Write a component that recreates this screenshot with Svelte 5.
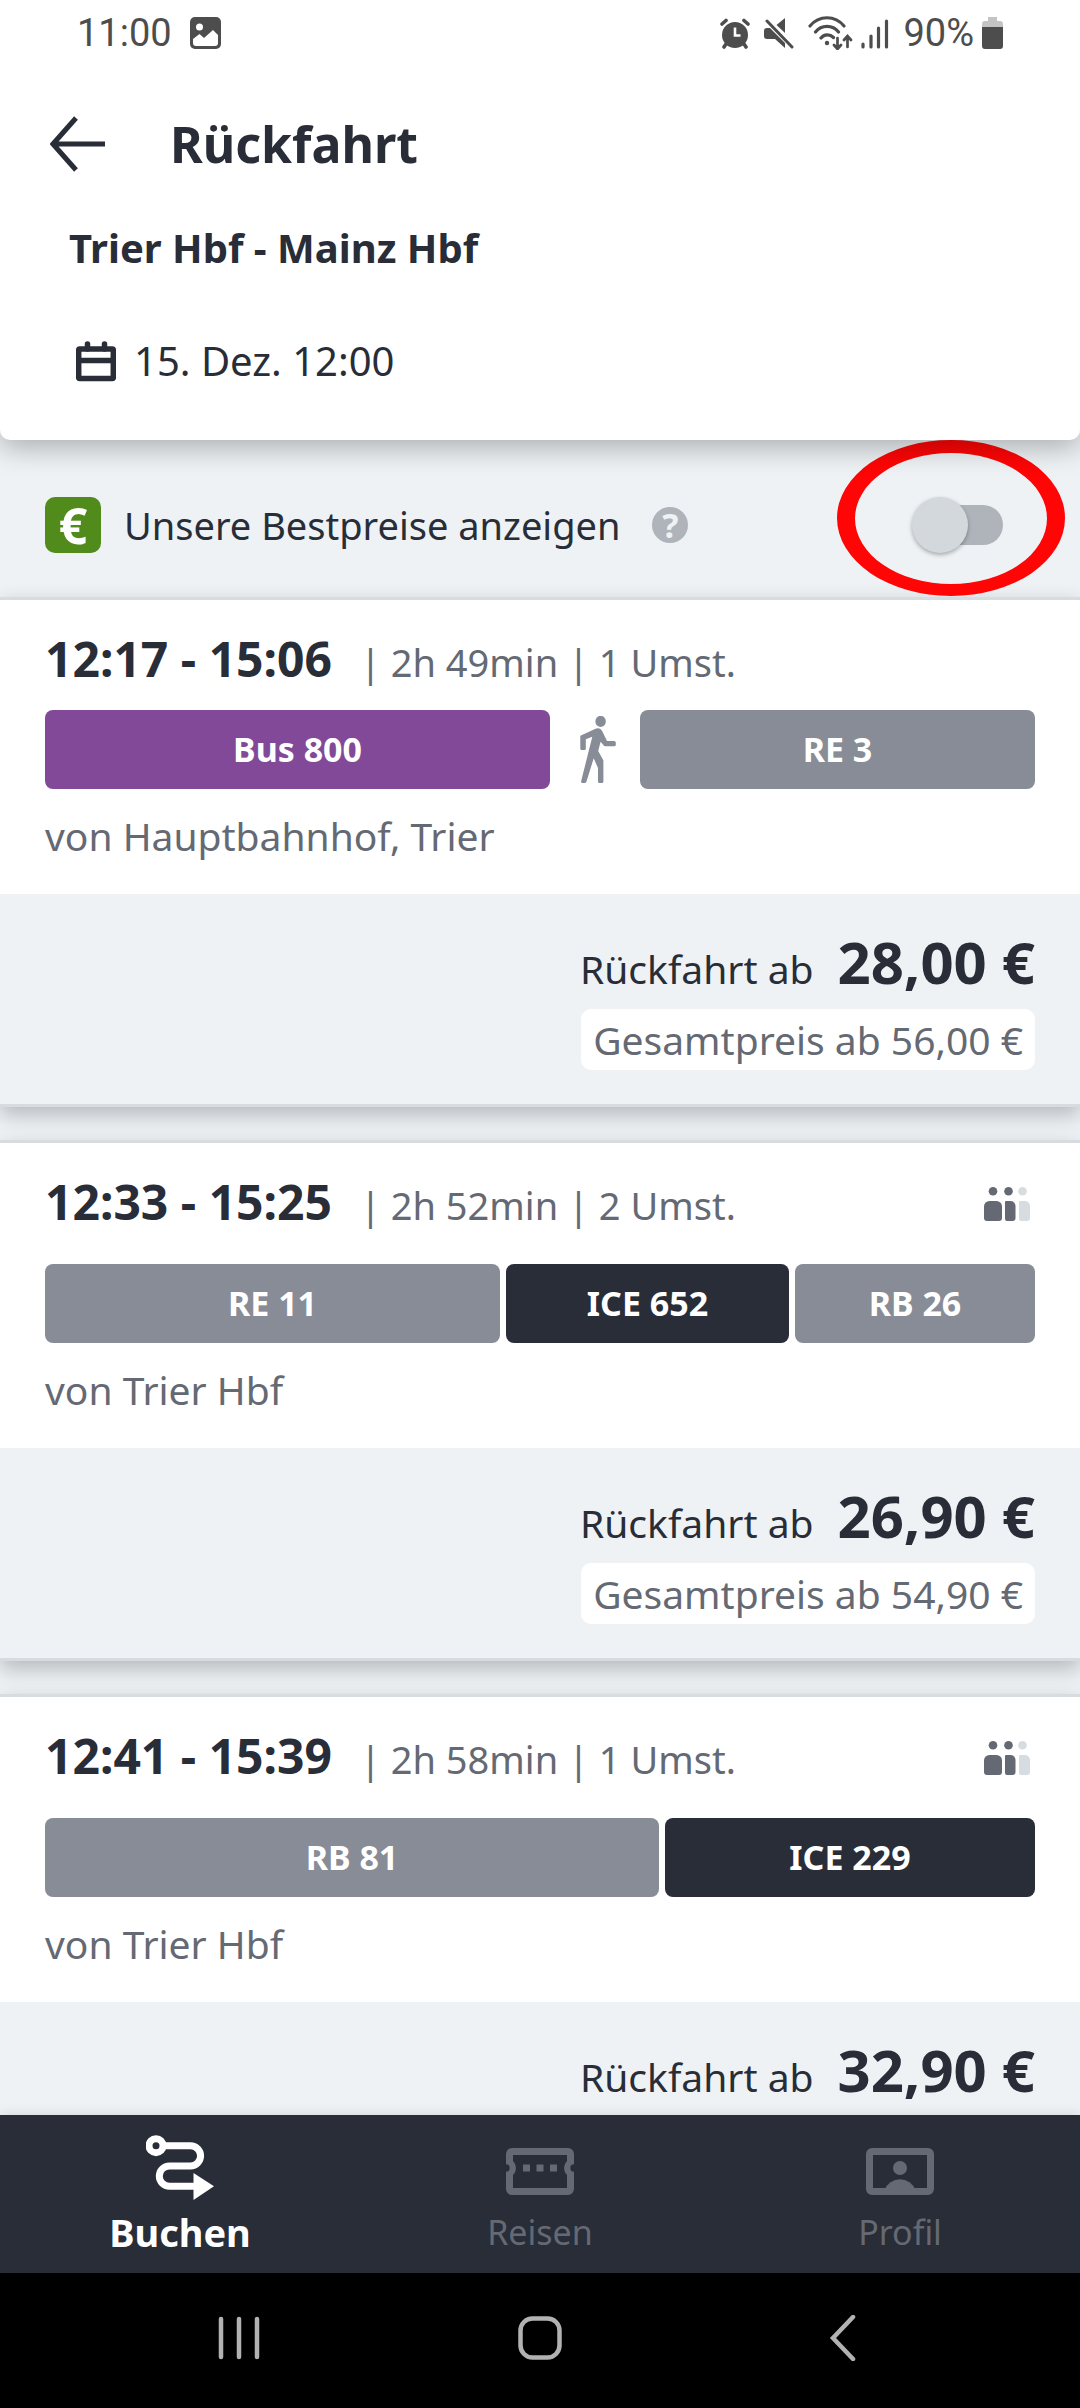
<script>
  const navItems = ['Buchen', 'Reisen', 'Profil']

  const connections = [
    {
      time: '12:17 - 15:06',
      details: '| 2h 49min | 1 Umst.',
      from: 'von Hauptbahnhof, Trier',
      price: '28,00 €',
      total: '56,00 €',
      occupancy: false,
      legs: [
        { type: 'bus', name: 'Bus 800', share: 505 },
        { type: 'walk' },
        { type: 'regio', name: 'RE 3', share: 395 }
      ]
    },
    {
      time: '12:33 - 15:25',
      details: '| 2h 52min | 2 Umst.',
      from: 'von Trier Hbf',
      price: '26,90 €',
      total: '54,90 €',
      occupancy: true,
      legs: [
        { type: 'regio', name: 'RE 11', share: 455 },
        { type: 'ice', name: 'ICE 652', share: 283 },
        { type: 'regio', name: 'RB 26', share: 240 }
      ]
    },
    {
      time: '12:41 - 15:39',
      details: '| 2h 58min | 1 Umst.',
      from: 'von Trier Hbf',
      price: '32,90 €',
      occupancy: true,
      legs: [
        { type: 'regio', name: 'RB 81', share: 614 },
        { type: 'ice', name: 'ICE 229', share: 370 }
      ]
    }
  ]

  let active = $state('Buchen')
  let bestPrices = $state(false)
</script>

<div class="screen">
  <header class="header">
    <div class="status">
      <span>11:00</span>
      <svg class="picture" width="31" height="32" viewBox="0 0 31 32">
        <rect width="31" height="32" rx="5" fill="#4d4d4d" />
        <circle cx="9.500" cy="10" r="3.500" fill="#fff" />
        <path d="M3 22l6.500-5 4.500 4L23 13l5 5v8a3 3 0 0 1-3 3H6a3 3 0 0 1-3-3z" fill="#fff" />
      </svg>
      <div class="status-right">
        <svg width="30" height="32" viewBox="0 0 30 32" fill="none" stroke="#4d4d4d" stroke-linecap="round">
          <circle cx="15" cy="18" r="13" fill="#4d4d4d" stroke="none" />
          <path d="M2 7l4-3.500M28 7l-4-3.500M6 27l-2 3M24 27l2 3" stroke-width="3.600" />
          <path d="M15 10.500v8h5.500" stroke="#fff" stroke-width="2.600" stroke-linecap="butt" />
        </svg>
        <svg width="30" height="32" viewBox="0 0 30 32">
          <path d="M3 11h3l15 15v5L11 22H3a3 3 0 0 1-3-3v-5a3 3 0 0 1 3-3zM12.500 8L21 1v15z" fill="#4d4d4d" />
          <path d="M3 4l25 26" stroke="#4d4d4d" stroke-width="3" stroke-linecap="round" />
        </svg>
        <div class="pair">
          <svg width="45" height="34" viewBox="0 0 45 34" fill="none" stroke="#4d4d4d" stroke-width="3.200" stroke-linecap="round">
            <path d="M2 10C11-1 27-1 36 10M7.500 16c6-7.500 17-7.500 23 0M13 22c3-4 9-4 12.500-.5" />
            <circle cx="19" cy="27" r="2.200" fill="#4d4d4d" stroke="none" />
            <path d="M29.500 22v10M26 29l3.500 4 3.500-4M39.500 31V21M36 24l3.500-4 3.500 4" stroke-width="2.700" />
          </svg>
          <svg width="28" height="32" viewBox="0 0 28 32" stroke="#4d4d4d" stroke-width="3.200" stroke-linecap="round">
            <path d="M2 27v3M10 19v11M17.500 11v19M25.500 4v26" />
          </svg>
        </div>
        <div class="pair">
          <span>90%</span>
          <svg width="21" height="32" viewBox="0 0 21 32">
            <path d="M6 0h9v4h3a3 3 0 0 1 3 3v4H0V7a3 3 0 0 1 3-3h3z" fill="#c4c4c4" />
            <path d="M0 10h21v19a3 3 0 0 1-3 3H3a3 3 0 0 1-3-3z" fill="#4d4d4d" />
          </svg>
        </div>
      </div>
    </div>

    <div class="toolbar">
      <button class="back" aria-label="Zurück">
        <svg width="56" height="56" viewBox="0 0 56 56" fill="none" stroke="#282d37" stroke-width="5">
          <path d="M55 28H4M26 2L3 28l23 26" />
        </svg>
      </button>
      <h1>Rückfahrt</h1>
    </div>
    <h2>Trier Hbf - Mainz Hbf</h2>
    <div class="date">
      <svg width="40" height="42" viewBox="0 0 40 42" fill="none" stroke="#282d37">
        <rect x="2.700" y="9" width="34.600" height="29.500" rx="1" stroke-width="5.500" />
        <path d="M2 20.500h36" stroke-width="5.500" />
        <path d="M11.500 4v5M28.500 4v5" stroke-width="5.500" stroke-linecap="round" />
      </svg>
      <span>15. Dez. 12:00</span>
    </div>
  </header>

  <main class="list">
    <div class="best-price">
      <span class="euro" aria-hidden="true">€</span>
      <label for="best-price-switch">Unsere Bestpreise anzeigen</label>
      <button class="help" aria-label="Hilfe">?</button>
      <input id="best-price-switch" class="switch" type="checkbox" role="switch" bind:checked={bestPrices} />
      <svg class="marker" width="228" height="156" viewBox="0 0 228 156">
        <path
          fill="#ff0505"
          fill-rule="evenodd"
          d="M0 78a114 78 0 0 1 228 0a114 78 0 0 1-228 0zM18 78.500a96 65.500 0 0 0 192 0a96 65.500 0 0 0-192 0z" />
      </svg>
    </div>

    {#each connections as connection}
      <article class="card">
        <div class="journey">
          <div class="summary" class:with-occupancy={connection.occupancy}>
            <strong class="time">{connection.time}</strong>
            <span class="details">{connection.details}</span>
            {#if connection.occupancy}
              <svg class="occupancy" width="46" height="34" viewBox="0 0 46 34" fill="#646973">
                <circle cx="9" cy="4.300" r="4.300" />
                <circle cx="24.500" cy="4.300" r="4.300" />
                <circle cx="38.500" cy="4.300" r="4.300" fill="#d7dce1" />
                <path d="M5.500 14h7a5.500 5.500 0 0 1 5.500 5.500V31a3 3 0 0 1-3 3H3a3 3 0 0 1-3-3V19.500A5.500 5.500 0 0 1 5.500 14z" />
                <path d="M22 14h4.500a5 5 0 0 1 5 5v12a3 3 0 0 1-3 3h-5.500a2 2 0 0 1-2-2V15a1 1 0 0 1 1-1z" />
                <path d="M36 14h5a5 5 0 0 1 5 5v12a3 3 0 0 1-3 3h-6a2 2 0 0 1-2-2V15a1 1 0 0 1 1-1z" fill="#d7dce1" />
              </svg>
            {/if}
          </div>
          <div class="legs">
            {#each connection.legs as leg}
              {#if leg.type === 'walk'}
                <div class="walk">
                  <svg width="36" height="68" viewBox="0 0 36 68" fill="#878c96">
                    <ellipse cx="20.600" cy="5.400" rx="5.200" ry="5.600" />
                    <path
                      d="M.3 19.700L15 13q4.500-2 7 1.700L27 25h7q1.800 0 1.800 1.800V29q0 1.300-1.800 1.300H25.500q-1.500 0-2.300-1.500L20.600 25.700 18.200 35l5.200 9.500V65.500q0 1.500-1.500 1.500H19.500q-1.500 0-1.500-1.500V52L13.700 42.300 6.500 65.500Q6 67 4.500 67H2.500Q.8 67 1.200 65L12.300 20.700 5.800 23.300V32.500Q5.800 34 4.300 34H1.800Q.3 34 .3 32.500z" />
                  </svg>
                </div>
              {:else}
                <div class="leg {leg.type}" style="flex-grow: {leg.share}">{leg.name}</div>
              {/if}
            {/each}
          </div>
          <p class="from">{connection.from}</p>
        </div>
        <div class="offer">
          <div class="price-row">
            <span>Rückfahrt ab</span>
            <strong class="price">{connection.price}</strong>
          </div>
          {#if connection.total}
            <span class="total">Gesamtpreis ab {connection.total}</span>
          {/if}
        </div>
      </article>
    {/each}
  </main>

  <nav class="tabs">
    {#each navItems as item}
      <button class="tab" class:active={active === item} onclick={() => (active = item)}>
        {#if item === 'Buchen'}
          <svg width="68" height="66" viewBox="0 0 68 66" fill="none" stroke="currentColor" stroke-width="7">
            <circle cx="10" cy="10.700" r="7" />
            <path d="M18 10.700h26.500a10 10 0 0 1 0 20.200H23.500a10 10 0 0 0 0 20.400H50" />
            <path d="M47.500 38L68 51.300 47.500 65z" fill="currentColor" stroke="none" />
          </svg>
        {:else if item === 'Reisen'}
          <svg width="68" height="66" viewBox="0 0 68 66" fill="none" stroke="currentColor" stroke-width="7">
            <rect x="3.500" y="16.500" width="61" height="40" rx="2.500" />
            <circle cx="0" cy="33" r="10" fill="currentColor" stroke="none" />
            <circle cx="68" cy="33" r="10" fill="currentColor" stroke="none" />
            <circle class="notch" cx="0" cy="33" r="3.700" />
            <circle class="notch" cx="68" cy="33" r="3.700" />
            <path d="M17 33h35" stroke-dasharray="7 6.500" />
          </svg>
        {:else}
          <svg width="68" height="66" viewBox="0 0 68 66" fill="none" stroke="currentColor" stroke-width="7">
            <rect x="3.500" y="16.500" width="61" height="40" rx="2.500" />
            <circle cx="34" cy="33" r="7" fill="currentColor" stroke="none" />
            <path d="M18.500 55a16.500 16.500 0 0 1 31 0z" fill="currentColor" stroke="none" />
          </svg>
        {/if}
        <span>{item}</span>
      </button>
    {/each}
  </nav>

  <div class="system">
    <button aria-label="Letzte Apps">
      <svg width="46" height="46" viewBox="0 0 46 46" stroke="#b2b2b2" stroke-width="4.500" stroke-linecap="round">
        <path d="M5 4v38M23 4v38M41 4v38" />
      </svg>
    </button>
    <button aria-label="Startseite">
      <svg width="46" height="46" viewBox="0 0 46 46" fill="none" stroke="#b2b2b2" stroke-width="4.500">
        <rect x="3.500" y="3.500" width="39" height="39" rx="12" />
      </svg>
    </button>
    <button aria-label="Zurück">
      <svg width="46" height="46" viewBox="0 0 46 46" fill="none" stroke="#b2b2b2" stroke-width="4.500" stroke-linecap="round">
        <path d="M35 2L15 23l20 21" />
      </svg>
    </button>
  </div>
</div>

<style>
  :global(body) {
    margin: 0;
    background: #eef2f5;
  }

  .screen {
    display: flex;
    flex-direction: column;
    height: 100vh;
    overflow: hidden;
    background: #eef2f5;
    color: #282d37;
    font-family: 'Noto Sans', sans-serif;
    font-size: 38px;
    line-height: 52px;
  }

  button {
    padding: 0;
    border: 0;
    background: none;
    font: inherit;
  }

  svg {
    display: block;
    flex-shrink: 0;
  }

  .header {
    position: relative;
    z-index: 1;
    padding-bottom: 53px;
    border-radius: 0 0 10px 10px;
    background: #fff;
    box-shadow: 0 8px 28px rgba(0, 0, 0, 0.28);
  }

  .status {
    display: flex;
    align-items: center;
    height: 66px;
    padding: 0 77px;
    color: #4d4d4d;
    font-family: Roboto, sans-serif;
  }

  .picture {
    margin-left: 18px;
  }

  .status-right {
    display: flex;
    align-items: center;
    gap: 14px;
    margin-left: auto;
  }

  .pair {
    display: flex;
    align-items: center;
    gap: 8px;
  }

  .toolbar {
    display: flex;
    align-items: center;
    gap: 64px;
    height: 156px;
    padding-left: 50px;
  }

  h1 {
    margin: 0;
    font-size: 50px;
    font-weight: 700;
  }

  h2 {
    margin: 0 0 61px;
    padding-left: 69px;
    font-size: 40px;
    font-weight: 700;
  }

  .date {
    display: flex;
    align-items: center;
    gap: 18px;
    padding-left: 76px;
    font-size: 40px;
  }

  .list {
    flex: 1;
    min-height: 0;
    overflow: hidden;
  }

  .best-price {
    position: relative;
    display: flex;
    align-items: center;
    padding: 57px 45px 44px;
  }

  .euro {
    width: 56px;
    margin-right: 23px;
    border-radius: 10px;
    background: #508b1b;
    color: #fff;
    font-size: 50px;
    font-weight: 700;
    line-height: 56px;
    text-align: center;
  }

  .help {
    width: 36px;
    height: 36px;
    margin-left: 32px;
    border-radius: 50%;
    background: #afb4bb;
    color: #eef2f5;
    font-size: 34px;
    font-weight: 700;
    line-height: 36px;
  }

  .switch {
    appearance: none;
    position: relative;
    width: 80px;
    height: 40px;
    margin: 0 32px 0 auto;
    border-radius: 20px;
    background: #afb4bb;
  }

  .switch::before {
    content: '';
    position: absolute;
    top: -8px;
    left: -11px;
    width: 56px;
    height: 56px;
    border-radius: 50%;
    background: #d3d8dc;
    box-shadow: 0 2px 4px rgba(0, 0, 0, 0.3);
  }

  .switch:checked::before {
    left: 35px;
  }

  .marker {
    position: absolute;
    top: 0;
    right: 15px;
    pointer-events: none;
  }

  .card {
    margin-bottom: 33px;
    border-top: 3px solid #d7dce1;
    border-bottom: 3px solid #d7dce1;
    box-shadow: 0 8px 20px rgba(0, 0, 0, 0.24);
  }

  .journey {
    padding: 31px 45px 32px;
    background: #fff;
  }

  .summary {
    display: flex;
    align-items: baseline;
    margin-bottom: 20px;
    line-height: 56px;
  }

  .with-occupancy {
    margin-bottom: 31px;
  }

  .time {
    margin-right: 28px;
    font-size: 48px;
  }

  .details,
  .from,
  .total {
    color: #646973;
  }

  .occupancy {
    align-self: center;
    margin: 0 5px 0 auto;
  }

  .legs {
    display: flex;
    gap: 6px;
    margin-bottom: 21px;
  }

  .leg {
    flex: 1 1 0;
    border-radius: 8px;
    color: #fff;
    font-size: 34px;
    font-weight: 700;
    line-height: 79px;
    text-align: center;
  }

  .bus {
    background: #814997;
  }

  .regio {
    background: #878c96;
  }

  .ice {
    background: #282d37;
  }

  .walk {
    display: flex;
    align-items: center;
    justify-content: flex-end;
    width: 60px;
    padding-right: 18px;
  }

  .from {
    margin: 0;
    font-size: 39px;
  }

  .offer {
    display: flex;
    flex-direction: column;
    align-items: flex-end;
    gap: 10px;
    padding: 38px 45px 34px;
    background: #eef2f5;
    font-size: 39px;
  }

  .price-row {
    display: flex;
    align-items: baseline;
    gap: 24px;
    line-height: 60px;
  }

  .price {
    font-size: 58px;
  }

  .total {
    padding: 0 12px;
    border-radius: 10px;
    background: #fff;
    line-height: 61px;
  }

  .tabs {
    position: relative;
    display: grid;
    grid-template-columns: repeat(3, 1fr);
    background: #282d37;
    box-shadow: 0 0 12px rgba(0, 0, 0, 0.12);
  }

  .tab {
    display: flex;
    flex-direction: column;
    align-items: center;
    height: 158px;
    padding-top: 20px;
    color: #646973;
    font-size: 34px;
    line-height: 62px;
  }

  .active {
    color: #fff;
    font-size: 38px;
    font-weight: 700;
  }

  .notch {
    fill: #282d37;
    stroke: none;
  }

  .system {
    display: flex;
    align-items: center;
    justify-content: space-around;
    height: 129px;
    padding: 0 88px 6px;
    background: #000;
  }
</style>
